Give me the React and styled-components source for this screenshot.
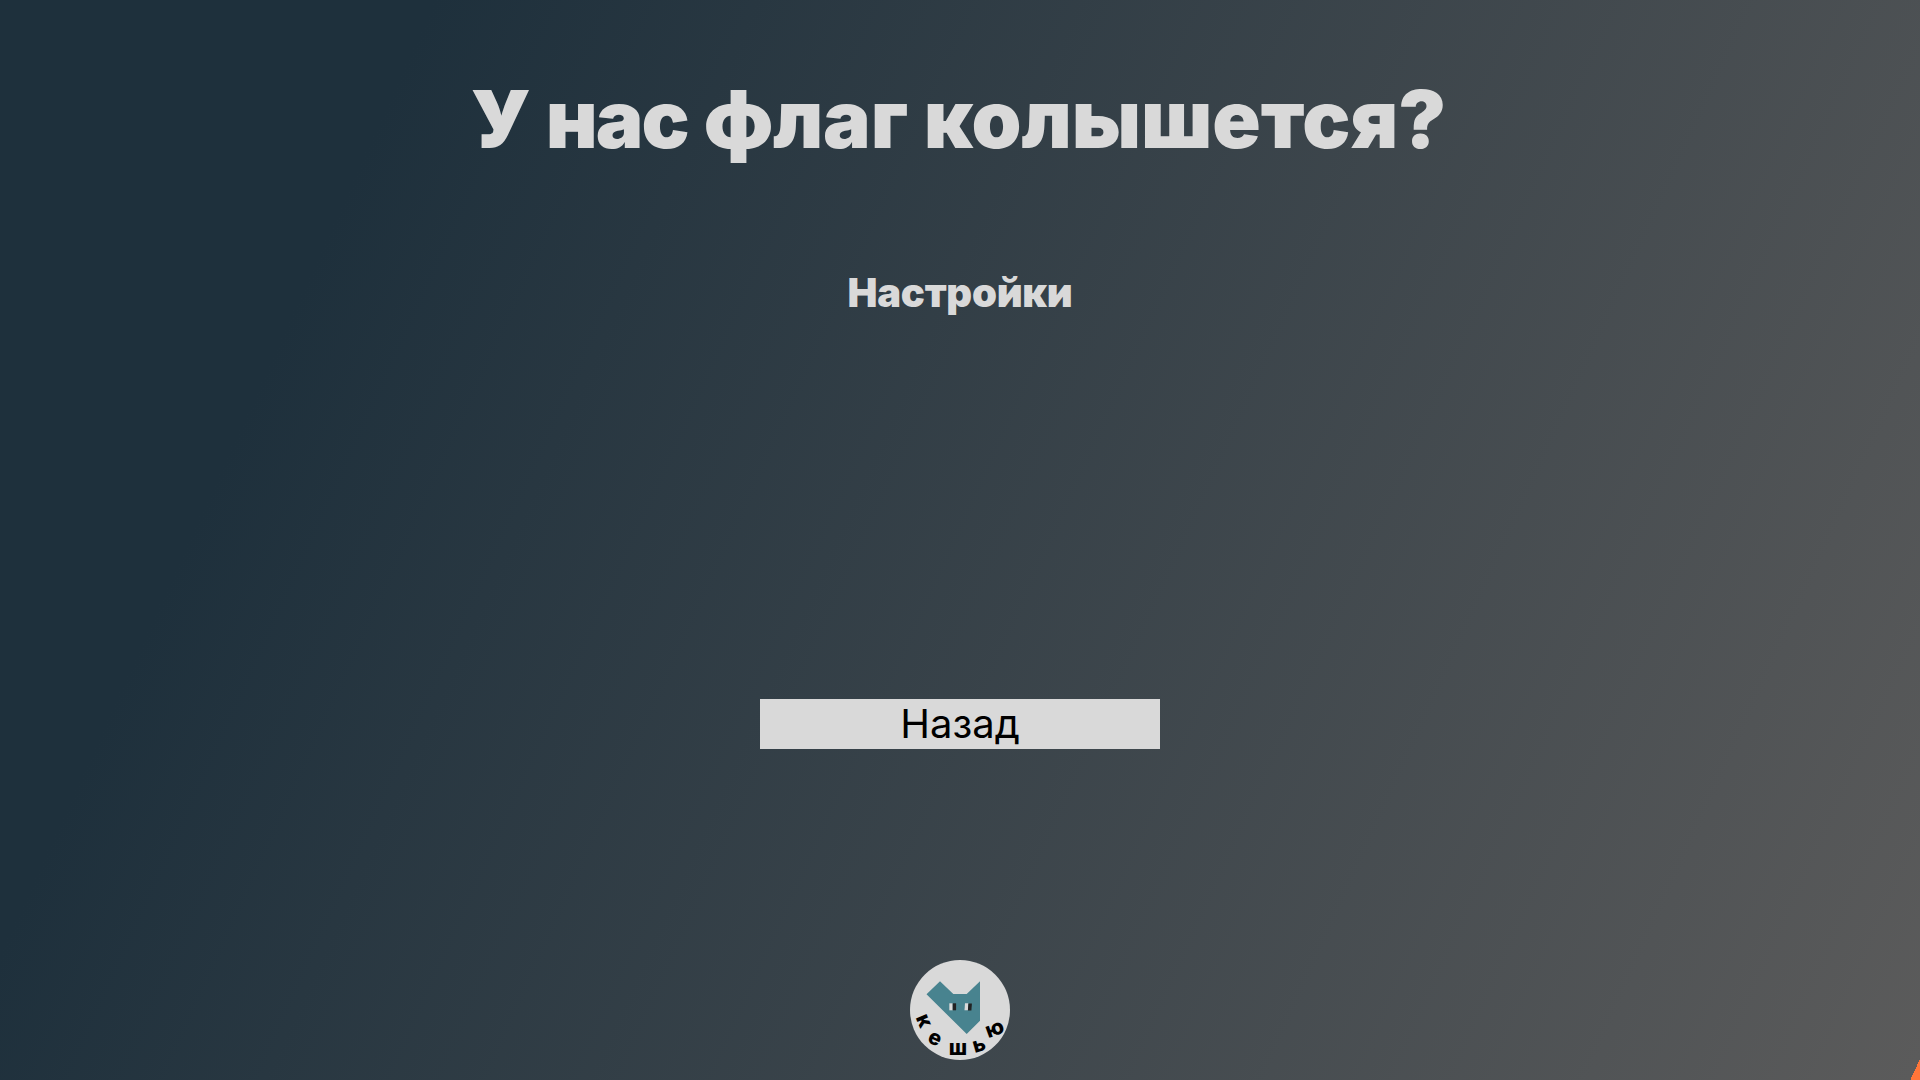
import React from "react";
import styled, { createGlobalStyle } from "styled-components";

const GlobalStyle = createGlobalStyle`
  body { margin: 0; overflow: hidden; }
`;

const Page = styled.main`
  box-sizing: border-box;
  width: 100vw;
  height: 100vh;
  padding: 70px 0 20px;
  display: flex;
  flex-direction: column;
  align-items: center;
  font-family: Inter, "Noto Sans", sans-serif;
  color: #d9d9d9;
  background: linear-gradient(114.5deg, #1e303c 18%, #5b5b5b 99.6%, #ff7539 99.6%);
`;

const Title = styled.h1`
  margin: 0;
  padding-right: 3px;
  font-size: 80px;
  line-height: 97px;
  font-weight: 900;
  white-space: nowrap;
`;

const Word = styled.span`
  letter-spacing: ${(p) => p.$tracking}px;
`;

const Subtitle = styled.h2`
  margin: 102px 0 0;
  font-size: 40px;
  line-height: 48px;
  font-weight: 900;
  letter-spacing: -0.25px;
`;

const BackButton = styled.button`
  margin: 382px 0 0;
  width: 400px;
  height: 50px;
  padding: 0;
  border: 0;
  background: #d9d9d9;
  color: #000;
  font: 400 40px/50px Inter, "Noto Sans", sans-serif;
`;

const Logo = styled.svg`
  display: block;
  width: 100px;
  height: 100px;
  margin-top: auto;
`;

const Letter = styled.text`
  font: 800 21px Inter, "Noto Sans", sans-serif;
  fill: #000;
  text-anchor: middle;
`;

const letters = [
  { char: "к", x: 13.2, y: 61, angle: 67 },
  { char: "е", x: 24.7, y: 79, angle: 25 },
  { char: "ш", x: 48, y: 89.3, angle: 0 },
  { char: "ь", x: 69.3, y: 85.7, angle: -16 },
  { char: "ю", x: 85, y: 69.8, angle: -20 },
];

export default function App() {
  return (
    <>
      <GlobalStyle />
      <Page>
        <Title>
          <Word $tracking={-1}>У</Word> <Word $tracking={-2}>нас</Word>{" "}
          <Word $tracking={-0.2}>флаг</Word> колышется?
        </Title>
        <Subtitle>Настройки</Subtitle>
        <BackButton type="button">Назад</BackButton>
        <Logo viewBox="0 0 100 100">
          <circle cx="50" cy="50" r="50" fill="#d9d9d9" />
          <path d="M16.5 34.3 30 21.3 43.3 34H56.7L70 21.3V60.7L56.7 74Z" fill="#48838f" />
          <path d="M39.3 43.3h3.4v7h-3.4z" fill="#d9d9d9" />
          <path d="M42.7 43.3h3.4v7h-3.4z" fill="#222" />
          <path d="M55 43.3h3.4l-.5 7h-3.4z" fill="#d9d9d9" />
          <path d="M58.4 43.6h3.5l-.5 7h-3.5z" fill="#222" />
          {letters.map(({ char, x, y, angle }) => (
            <Letter key={char} y="5.7" transform={`translate(${x} ${y}) rotate(${angle})`}>
              {char}
            </Letter>
          ))}
        </Logo>
      </Page>
    </>
  );
}
